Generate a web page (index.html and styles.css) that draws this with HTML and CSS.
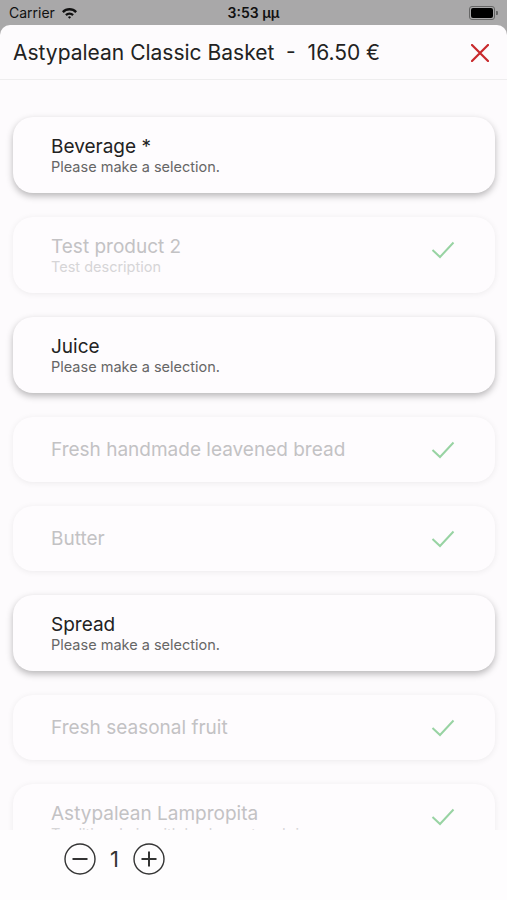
FILE: index.html
```html
<!DOCTYPE html>
<html lang="en">
<head>
    <meta charset="UTF-8">
    <meta name="viewport" content="width=device-width, initial-scale=1.0">
    <title>Astypalean Classic Basket</title>
    <link rel="stylesheet" href="styles.css">
</head>
<body>

    <div class="status-bar">
        <div class="status-left">
            <span>Carrier</span>
            <svg class="wifi" width="17" height="12" viewBox="0 0 17 12">
                <path d="M1 4.2 A10.5 10.5 0 0 1 16 4.2 L14.3 5.9 A8 8 0 0 0 2.7 5.9 Z" fill="#111"/>
                <path d="M4.1 7.3 A6 6 0 0 1 12.9 7.3 L11.2 9 A3.6 3.6 0 0 0 5.8 9 Z" fill="#111"/>
                <path d="M7 10.2 A2 2 0 0 1 10 10.2 L8.5 11.8 Z" fill="#111"/>
            </svg>
        </div>
        <div class="status-time">3:53 μμ</div>
        <div class="status-right">
            <div class="battery"><div class="battery-fill"></div></div>
            <div class="battery-tip"></div>
        </div>
    </div>

    <div class="sheet">
        <div class="sheet-header">
            <h1 class="sheet-title">Astypalean Classic Basket  -  16.50 €</h1>
            <button class="close-btn" aria-label="Close">
                <svg width="18" height="18" viewBox="0 0 18 18">
                    <path d="M1 1 L17 17 M17 1 L1 17" stroke="#c8282b" stroke-width="2.2" stroke-linecap="round"/>
                </svg>
            </button>
        </div>

        <div class="option-list">
            <div class="option active">
                <div class="option-text">
                    <div class="option-name">Beverage *</div>
                    <div class="option-desc">Please make a selection.</div>
                </div>
            </div>
            <div class="option done">
                <div class="option-text">
                    <div class="option-name">Test product 2</div>
                    <div class="option-desc">Test description</div>
                </div>
                <svg class="check" width="24" height="18" viewBox="0 0 24 18"><path d="M1.5 9 L9 16 L22.5 1.5" fill="none" stroke="#98d3a3" stroke-width="2"/></svg>
            </div>
            <div class="option active">
                <div class="option-text">
                    <div class="option-name">Juice</div>
                    <div class="option-desc">Please make a selection.</div>
                </div>
            </div>
            <div class="option done single">
                <div class="option-text">
                    <div class="option-name">Fresh handmade leavened bread</div>
                </div>
                <svg class="check" width="24" height="18" viewBox="0 0 24 18"><path d="M1.5 9 L9 16 L22.5 1.5" fill="none" stroke="#98d3a3" stroke-width="2"/></svg>
            </div>
            <div class="option done single">
                <div class="option-text">
                    <div class="option-name">Butter</div>
                </div>
                <svg class="check" width="24" height="18" viewBox="0 0 24 18"><path d="M1.5 9 L9 16 L22.5 1.5" fill="none" stroke="#98d3a3" stroke-width="2"/></svg>
            </div>
            <div class="option active">
                <div class="option-text">
                    <div class="option-name">Spread</div>
                    <div class="option-desc">Please make a selection.</div>
                </div>
            </div>
            <div class="option done single">
                <div class="option-text">
                    <div class="option-name">Fresh seasonal fruit</div>
                </div>
                <svg class="check" width="24" height="18" viewBox="0 0 24 18"><path d="M1.5 9 L9 16 L22.5 1.5" fill="none" stroke="#98d3a3" stroke-width="2"/></svg>
            </div>
            <div class="option done">
                <div class="option-text">
                    <div class="option-name">Astypalean Lampropita</div>
                    <div class="option-desc">Traditional pie with lamb meat and rice</div>
                </div>
                <svg class="check" width="24" height="18" viewBox="0 0 24 18"><path d="M1.5 9 L9 16 L22.5 1.5" fill="none" stroke="#98d3a3" stroke-width="2"/></svg>
            </div>
        </div>

        <div class="sheet-footer">
            <button class="qty-btn" aria-label="Decrease">
                <svg width="32" height="32" viewBox="0 0 32 32">
                    <circle cx="16" cy="16" r="15" fill="none" stroke="#333" stroke-width="1.4"/>
                    <path d="M8.5 16 H23.5" stroke="#333" stroke-width="2"/>
                </svg>
            </button>
            <span class="qty-value">1</span>
            <button class="qty-btn" aria-label="Increase">
                <svg width="32" height="32" viewBox="0 0 32 32">
                    <circle cx="16" cy="16" r="15" fill="none" stroke="#333" stroke-width="1.4"/>
                    <path d="M8.5 16 H23.5 M16 8.5 V23.5" stroke="#333" stroke-width="2"/>
                </svg>
            </button>
        </div>
    </div>

</body>
</html>
```

FILE: styles.css
```css
body {
    font-family: Inter, "Liberation Sans", sans-serif;
    background-color: #a9a8a9;
    margin: 0;
    padding: 0;
    height: 900px;
    display: flex;
    flex-direction: column;
    overflow: hidden;
}
.status-bar {
    height: 25px;
    display: flex;
    align-items: center;
    justify-content: space-between;
    padding: 0 9px;
    font-size: 14px;
    color: #111;
    flex-shrink: 0;
}
.status-left {
    display: flex;
    align-items: center;
    gap: 6px;
    width: 120px;
}
.status-time {
    font-weight: 600;
}
.status-right {
    width: 120px;
    display: flex;
    justify-content: flex-end;
    align-items: center;
}
.battery {
    width: 22px;
    height: 10px;
    border: 1px solid #666;
    border-radius: 3px;
    padding: 1px;
}
.battery-fill {
    width: 100%;
    height: 100%;
    background-color: #000;
    border-radius: 2px;
}
.battery-tip {
    width: 2px;
    height: 4px;
    background-color: #666;
    border-radius: 0 1px 1px 0;
    margin-left: 1px;
}
.sheet {
    flex: 1;
    background-color: #fdfbfd;
    border-radius: 10px 10px 0 0;
    display: flex;
    flex-direction: column;
    overflow: hidden;
}
.sheet-header {
    height: 55px;
    flex-shrink: 0;
    display: flex;
    align-items: center;
    justify-content: space-between;
    padding: 1px 18px 0 13px;
    border-bottom: 1px solid #eeedee;
    box-sizing: border-box;
}
.sheet-title {
    margin: 0;
    font-size: 21px;
    font-weight: 400;
    color: #222;
    white-space: pre;
}
.close-btn {
    background: none;
    border: none;
    padding: 0;
    display: flex;
}
.option-list {
    flex: 1;
    overflow: hidden;
    padding: 37px 12px 0 13px;
}
.option {
    display: flex;
    align-items: center;
    justify-content: space-between;
    background-color: #fefcfe;
    border-radius: 20px;
    padding: 19px 40px 17px 38px;
    margin-bottom: 24px;
}
.option.single {
    padding-top: 21px;
    padding-bottom: 21px;
}
.option-name {
    font-size: 19px;
    line-height: 22px;
    color: #222;
}
.option.single .option-name {
    line-height: 23px;
}
.option-desc {
    font-size: 14.5px;
    line-height: 18px;
    color: #666;
}
.option.active {
    box-shadow: 0 3px 7px rgba(0, 0, 0, 0.28);
}
.option.done {
    box-shadow: 0 1px 6px rgba(0, 0, 0, 0.07);
}
.option.done .option-name {
    color: #c3c2c4;
}
.option.done .option-desc {
    color: #d6d5d7;
}
.option.done .check {
    margin-top: -12px;
}
.option.done.single .check {
    margin-top: 0;
}
.sheet-footer {
    height: 70px;
    flex-shrink: 0;
    background-color: #fefdfe;
    display: flex;
    align-items: flex-start;
    padding: 13px 0 0 64px;
    box-sizing: border-box;
    gap: 14px;
}
.qty-btn {
    background: none;
    border: none;
    padding: 0;
    display: flex;
}
.qty-value {
    font-size: 22px;
    line-height: 32px;
    color: #333;
}
```
